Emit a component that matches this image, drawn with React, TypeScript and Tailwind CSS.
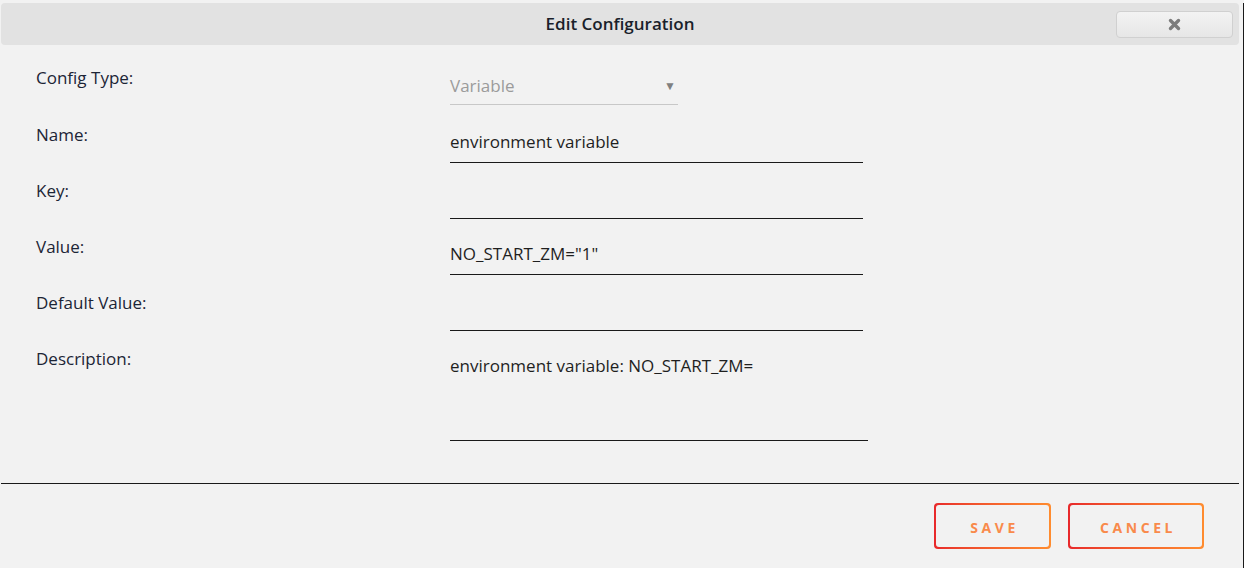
import { useState } from "react";

type Field = {
    label: string;
    value: string;
};

const fields: Field[] = [
    { label: "Name:", value: "environment variable" },
    { label: "Key:", value: "" },
    { label: "Value:", value: "NO_START_ZM=\"1\"" },
    { label: "Default Value:", value: "" },
];

function GradientButton({ children, width }: { children: string; width: string }) {
    return (
        <button className={`rounded-[4px] bg-gradient-to-r from-[#e8282b] to-[#ff8c2f] p-[2px] ${width}`}>
            <span className="flex h-[42px] items-center justify-center rounded-[3px] bg-[#f2f2f2] pl-[4px] pt-[2px] text-[14px] font-bold tracking-[3.6px] text-[#f98a4b]">
                {children}
            </span>
        </button>
    );
}

export default function App() {
    const [values, setValues] = useState(fields.map((f) => f.value));
    const [description, setDescription] = useState("environment variable: NO_START_ZM=");

    return (
        <div
            className="flex h-[568px] w-[1244px] flex-col bg-[#f2f2f2] pt-[3px] text-[17px] text-[#1c2536]"
            style={{ fontFamily: '"Open Sans", "Noto Sans", sans-serif' }}
        >
            <div className="flex flex-1 flex-col border-r border-[#1a1a1a] pr-[4px]">
                {/* title bar */}
                <div className="ml-[1px] flex h-[42px] items-center rounded-[4px] bg-[#e2e2e2] pl-[6px] pr-[6px]">
                    <div className="flex-1" />
                    <h2 className="text-[17px] font-semibold text-[#1a1f2b]">Edit Configuration</h2>
                    <div className="flex flex-1 justify-end">
                        <button className="flex h-[27px] w-[117px] items-center justify-center rounded-[4px] border border-[#d0d0d0] bg-gradient-to-b from-[#f3f3f3] to-[#e6e6e6]">
                            <svg width="13" height="13" viewBox="0 0 13 13">
                                <path d="M2.5 2.5 L10.5 10.5 M10.5 2.5 L2.5 10.5" stroke="#7c7c7c" strokeWidth="3.4" strokeLinecap="round" />
                            </svg>
                        </button>
                    </div>
                </div>

                {/* form */}
                <form className="flex flex-col pl-[36px] pt-[20px]">
                    <div className="flex h-[57px]">
                        <label className="w-[414px] leading-[26px]">Config Type:</label>
                        <div className="mt-[1px] flex h-[39px] w-[228px] items-center justify-between border-b border-[#c8c8c8] pr-[2px] pt-[2px] text-[#9b9b9b]">
                            <span>Variable</span>
                            <span className="text-[12px] text-[#808080]">▼</span>
                        </div>
                    </div>
                    {fields.map((f, i) => (
                        <div key={f.label} className="flex h-[56px]">
                            <label className="w-[414px] leading-[26px]">{f.label}</label>
                            <input
                                className="mt-[2px] h-[39px] w-[413px] border-b border-[#1a1a1a] bg-transparent pb-[4px] text-[#1f1f1f] outline-none"
                                value={values[i]}
                                onChange={(e) => setValues(values.map((v, j) => (j === i ? e.target.value : v)))}
                            />
                        </div>
                    ))}
                    <div className="flex">
                        <label className="w-[414px] leading-[26px]">Description:</label>
                        <textarea
                            className="mt-[2px] h-[93px] w-[418px] resize-none border-b border-[#1a1a1a] bg-transparent pt-[6px] leading-[24px] text-[#1f1f1f] outline-none"
                            value={description}
                            onChange={(e) => setDescription(e.target.value)}
                        />
                    </div>
                </form>

                <div className="mt-[42px] ml-[1px] border-t border-[#1a1a1a]" />

                {/* footer */}
                <div className="flex justify-end gap-[17px] pr-[35px] pt-[19px]">
                    <GradientButton width="w-[117px]">SAVE</GradientButton>
                    <GradientButton width="w-[136px]">CANCEL</GradientButton>
                </div>
            </div>
        </div>
    );
}
